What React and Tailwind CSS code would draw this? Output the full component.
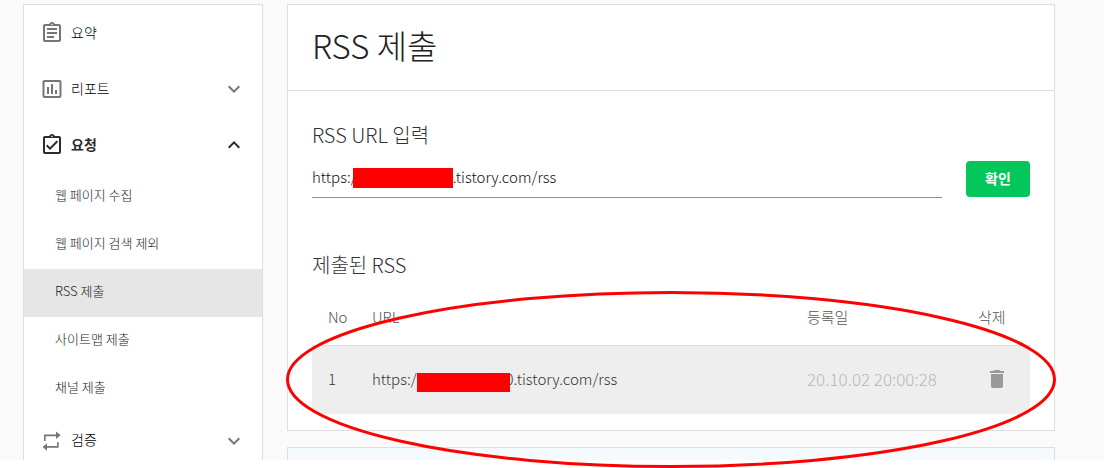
import { useState } from "react";
import {
  MdOutlineAssignment,
  MdOutlineAssignmentTurnedIn,
  MdInsertChartOutlined,
  MdExpandMore,
  MdExpandLess,
  MdDelete,
} from "react-icons/md";

const RepeatIcon = () => (
  <svg viewBox="0 0 24 24" className="size-6" fill="currentColor" aria-hidden="true">
    <path d="M4 12V5.600h12V2.500l4.600 3.800L16 10V7.200H5.600V12z M18.700 13.200v5.500H7v3l-4.400-3.700L7 14.300V17h10v-3.800z" />
  </svg>
);

const requestPages = ["웹 페이지 수집", "웹 페이지 검색 제외", "RSS 제출", "사이트맵 제출", "채널 제출"];

function MenuRow({ icon, label, chevron, active, last }) {
  return (
    <button
      type="button"
      className={
        last
          ? "flex h-[47px] w-full items-start px-4 pt-4 text-sm font-light text-black"
          : active
            ? "flex h-14 w-full items-center px-4 text-sm font-bold text-[#2b2b2b]"
            : "flex h-14 w-full items-center px-4 text-sm font-light text-black"
      }
    >
      <span className={active ? "text-2xl text-[#2b2b2b]" : "text-2xl text-[#757575]"}>{icon}</span>
      <span className="ml-[7px] flex-1 pb-0.5 text-left">{label}</span>
      {chevron && <span className={active ? "text-2xl text-[#2b2b2b]" : "text-2xl text-[#757575]"}>{chevron}</span>}
    </button>
  );
}

function Sidebar() {
  return (
    <nav className="w-60 shrink-0 border border-b-0 border-[#dedede] bg-white">
      <MenuRow icon={<MdOutlineAssignment />} label="요약" />
      <MenuRow icon={<MdInsertChartOutlined />} label="리포트" chevron={<MdExpandMore />} />
      <MenuRow icon={<MdOutlineAssignmentTurnedIn />} label="요청" chevron={<MdExpandLess />} active />
      <ul>
        {requestPages.map((page) => (
          <li key={page}>
            <a
              href="#"
              className={
                page === "RSS 제출"
                  ? "flex h-12 items-center bg-[#e6e6e6] px-[31px] pb-1 text-[13px] font-light text-[#222222]"
                  : "flex h-12 items-center px-[31px] pb-1 text-[13px] font-light text-[#222222]"
              }
            >
              {page}
            </a>
          </li>
        ))}
      </ul>
      <MenuRow icon={<RepeatIcon />} label="검증" chevron={<MdExpandMore />} last />
    </nav>
  );
}

export default function App() {
  const [url, setUrl] = useState("https:/" + "\u00a0".repeat(29) + ".tistory.com/rss");
  return (
    <div className="bg-white pb-2 font-['Noto_Sans_CJK_KR',sans-serif]">
      <div className="flex gap-6 bg-[#fafafa] pt-1 pr-[49px] pl-[23px]">
        <Sidebar />
        <main className="relative flex min-w-0 flex-1 flex-col gap-4">
          <section className="border border-[#dedede] bg-white">
            <h1 className="border-b border-[#dedede] px-6 pt-4 pb-[21px] text-[33px] leading-12 font-light text-[#222222]">
              RSS 제출
            </h1>
            <div className="px-6 pt-7 pb-4">
              <label htmlFor="rss-url" className="block text-xl leading-8 font-light text-[#333333]">
                RSS URL 입력
              </label>
              <div className="mt-2 flex items-start gap-6">
                <div className="relative flex-1">
                  <input
                    id="rss-url"
                    type="text"
                    value={url}
                    onChange={(e) => setUrl(e.target.value)}
                    className="block h-[39px] w-full border-b border-[#8f8f8f] bg-transparent pb-1 text-[15px] font-light text-[#111111] outline-none"
                  />
                  <span className="absolute top-[9px] left-[41px] h-5 w-[100px] bg-[#ff0000]" />
                </div>
                <button type="button" className="mt-[2px] h-9 w-16 rounded bg-[#03c75a] pb-0.5 text-sm font-bold text-white">
                  확인
                </button>
              </div>
              <h2 className="mt-[51px] text-xl leading-8 font-light text-[#333333]">제출된 RSS</h2>
              <table className="mt-2 w-full table-fixed text-left text-[15px] font-light text-[#333333]">
                <thead>
                  <tr className="h-14 border-b border-[#dedede] text-[#555555]">
                    <th className="w-11 pl-4 font-light">No</th>
                    <th className="pl-4 font-light">URL</th>
                    <th className="w-[171px] font-light">등록일</th>
                    <th className="w-[52px] font-light">삭제</th>
                  </tr>
                </thead>
                <tbody>
                  <tr className="h-[69px] bg-[#eeeeee]">
                    <td className="pb-0.5 pl-4">1</td>
                    <td className="pb-0.5 pl-4">
                      <span className="flex items-center">
                        https:/
                        <span className="z-10 mt-2 -mr-1 h-[19px] w-[93px] bg-[#ff0000]" />
                        0.tistory.com/rss
                      </span>
                    </td>
                    <td className="pb-0.5 text-[17px] text-[#b8b8b8]">20.10.02 20:00:28</td>
                    <td className="pb-0.5">
                      <button type="button" aria-label="삭제" className="ml-[7px] block text-2xl text-[#999999]">
                        <MdDelete />
                      </button>
                    </td>
                  </tr>
                </tbody>
              </table>
            </div>
          </section>
          <section className="h-[13px] border border-b-0 border-[#dedede] bg-[#f4fafd]" />
          <svg
            className="pointer-events-none absolute -bottom-2 -left-px h-[177px] w-[calc(100%+2px)]"
            viewBox="0 0 770 177"
            preserveAspectRatio="none"
            aria-hidden="true"
          >
            <ellipse cx="385" cy="88.5" rx="383.5" ry="87" fill="none" stroke="#ff0000" strokeWidth="3" />
          </svg>
        </main>
      </div>
    </div>
  );
}
